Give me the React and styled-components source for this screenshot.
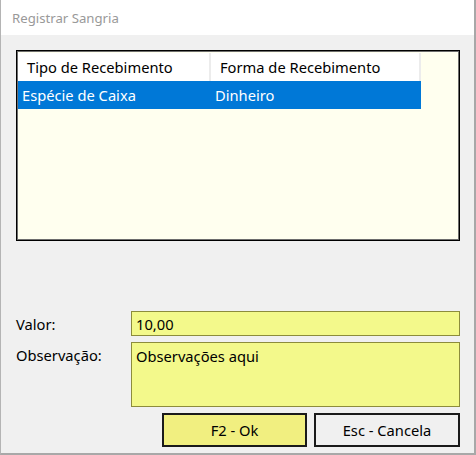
import styled, { createGlobalStyle } from 'styled-components';

const GlobalStyle = createGlobalStyle`
  html, body {
    margin: 0;
    padding: 0;
    background: #f0f0f0;
  }
  body {
    font-family: "Noto Sans", "Liberation Sans", sans-serif;
  }
`;

const columns = ['Tipo de Recebimento', 'Forma de Recebimento'];
const rows = [['Espécie de Caixa', 'Dinheiro']];

const App = () => {
  return (
    <>
      <GlobalStyle />
      <S_Window>
        <S_TitleBar>Registrar Sangria</S_TitleBar>
        <S_Body>
          <S_Grid>
            <S_GridRow>
              {columns.map((c) => (
                <S_HeaderCell key={c}>{c}</S_HeaderCell>
              ))}
            </S_GridRow>
            {rows.map((r, i) => (
              <S_GridRow key={i} $selected>
                {r.map((v) => (
                  <S_Cell key={v}>{v}</S_Cell>
                ))}
              </S_GridRow>
            ))}
          </S_Grid>

          <S_Form>
            <S_Label>Valor:</S_Label>
            <S_Input defaultValue="10,00" />
            <S_Label>Observação:</S_Label>
            <S_TextArea defaultValue="Observações aqui" />
          </S_Form>

          <S_Buttons>
            <S_Button $primary>F2 - Ok</S_Button>
            <S_Button>Esc - Cancela</S_Button>
          </S_Buttons>
        </S_Body>
      </S_Window>
    </>
  );
};

export default App;

const S_Window = styled.div`
  width: 476px;
  height: 455px;
  box-sizing: border-box;
  display: flex;
  flex-direction: column;
  background: #f0f0f0;
  border-left: 1px solid #b4b4b4;
  border-right: 2px solid #a8a8a8;
  border-bottom: 2px solid #a8a8a8;
`;

const S_TitleBar = styled.div`
  height: 35px;
  flex-shrink: 0;
  display: flex;
  align-items: center;
  padding-left: 11px;
  background: #ffffff;
  color: #999999;
  font-size: 13.2px;
`;

const S_Body = styled.div`
  flex: 1;
  display: flex;
  flex-direction: column;
  padding: 15px 14px 0 15px;
`;

const S_Grid = styled.div`
  height: 191px;
  box-sizing: border-box;
  border: 1px solid #000;
  box-shadow: inset 0 0 0 1px #6d6d6d;
  background: #ffffef;
  padding: 2px 0 0 1px;
`;

const S_GridRow = styled.div`
  display: grid;
  grid-template-columns: 193px 210px;
  height: 28px;
  background: ${(p) => (p.$selected ? '#0078d7' : '#ffffff')};
  color: ${(p) => (p.$selected ? '#ffffff' : '#000000')};
  width: 403px;
`;

const S_HeaderCell = styled.div`
  display: flex;
  align-items: center;
  padding-left: 9px;
  font-size: 14.7px;
  border-right: 2px solid #ececec;
`;

const S_Cell = styled.div`
  display: flex;
  align-items: center;
  padding-left: 4px;
  font-size: 14.7px;
`;

const S_Form = styled.div`
  margin-top: 70px;
  display: grid;
  grid-template-columns: 115px 1fr;
  row-gap: 6px;
  color: #000;
`;

const S_Label = styled.div`
  font-size: 14.7px;
  padding-top: 3px;
`;

const S_Field = `
  box-sizing: border-box;
  width: 100%;
  margin: 0;
  border: 1px solid #8c8c3c;
  background: #f3f98b;
  color: #000;
  font-family: "Noto Sans", "Liberation Sans", sans-serif;
  font-size: 14.7px;
  padding: 1px 4px;
  outline: none;
`;

const S_Input = styled.input`
  ${S_Field}
  height: 25px;
`;

const S_TextArea = styled.textarea`
  ${S_Field}
  height: 65px;
  resize: none;
  padding-top: 3px;
`;

const S_Buttons = styled.div`
  margin-top: 6px;
  display: flex;
  justify-content: flex-end;
  gap: 7px;
`;

const S_Button = styled.button`
  width: ${(p) => (p.$primary ? '145px' : '146px')};
  height: 34px;
  box-sizing: border-box;
  border: 2px solid #1a1a1a;
  background: ${(p) => (p.$primary ? '#f1ef80' : '#f0f0f0')};
  font-family: "Noto Sans", "Liberation Sans", sans-serif;
  font-size: 14.7px;
  color: #000;
  padding: 0;
`;
